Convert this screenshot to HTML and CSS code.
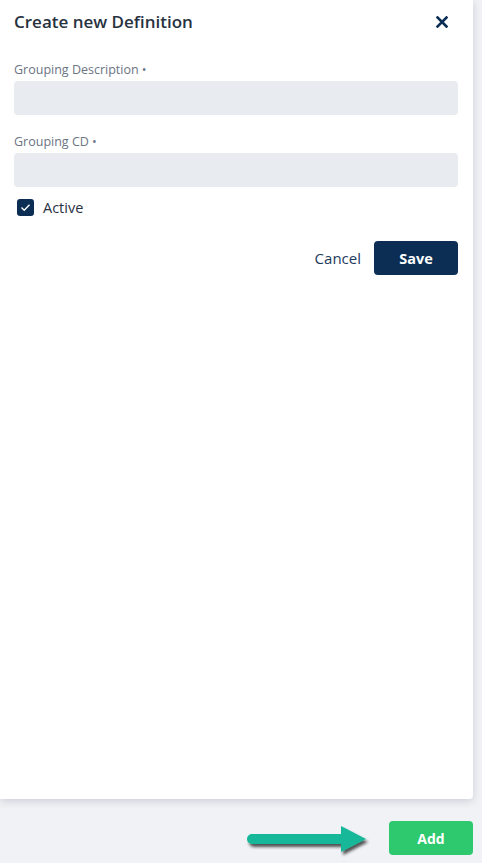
FILE: index.html
```html
<!DOCTYPE html>
<html lang="en">
<head>
    <meta charset="UTF-8">
    <meta name="viewport" content="width=device-width, initial-scale=1.0">
    <title>Create new Definition</title>
    <link rel="stylesheet" href="styles.css">
</head>
<body>

    <div class="panel">
        <!-- Header -->
        <div class="panel-header">
            <h1>Create new Definition</h1>
            <button class="close-btn" aria-label="Close">
                <svg width="12" height="12" viewBox="0 0 12 12">
                    <path d="M1.5 1.5 L10.5 10.5 M10.5 1.5 L1.5 10.5" stroke="#0c2e55" stroke-width="2.6" stroke-linecap="square"/>
                </svg>
            </button>
        </div>

        <!-- Form fields -->
        <div class="field first">
            <label>Grouping Description •</label>
            <input type="text" class="text-input">
        </div>

        <div class="field">
            <label>Grouping CD •</label>
            <input type="text" class="text-input">
        </div>

        <div class="check-row">
            <span class="checkbox">
                <svg width="11" height="9" viewBox="0 0 11 9">
                    <path d="M1.5 4.6 L4.2 7.2 L9.5 1.8" fill="none" stroke="#fff" stroke-width="1.4"/>
                </svg>
            </span>
            <span class="check-label">Active</span>
        </div>

        <div class="actions">
            <button class="cancel-btn">Cancel</button>
            <button class="save-btn">Save</button>
        </div>
    </div>

    <div class="bottom-bar">
        <svg class="arrow" width="130" height="36" viewBox="0 0 130 36">
            <defs>
                <filter id="shadow" x="-10%" y="-30%" width="130%" height="180%">
                    <feDropShadow dx="2" dy="3" stdDeviation="1.6" flood-color="#1a1a1a" flood-opacity="0.75"/>
                </filter>
            </defs>
            <g filter="url(#shadow)">
                <rect x="2" y="11" width="98" height="10" rx="5" fill="#13b899"/>
                <polygon points="96,3 121,16 96,29" fill="#13b899"/>
            </g>
        </svg>
        <button class="add-btn">Add</button>
    </div>

</body>
</html>
```

FILE: styles.css
```css
body {
    font-family: "Open Sans", Arial, sans-serif;
    background-color: #f0f2f5;
    margin: 0;
    padding: 0;
}

.panel {
    width: 473px;
    height: 799px;
    box-sizing: border-box;
    padding: 10px 15px 0 14px;
    background-color: #ffffff;
    border-radius: 0 0 4px 0;
    box-shadow: 0 2px 8px rgba(30, 45, 70, 0.18);
}

.panel-header {
    display: flex;
    justify-content: space-between;
    align-items: center;
    height: 24px;
}

h1 {
    margin: 0;
    font-size: 17px;
    line-height: 24px;
    font-weight: 600;
    color: #27323f;
}

.close-btn {
    border: none;
    background: none;
    padding: 0;
    margin-right: 10px;
    display: flex;
    cursor: pointer;
}

.field {
    margin-top: 19px;
}

.field.first {
    margin-top: 28px;
}

.field label {
    display: block;
    font-size: 12.5px;
    line-height: 16px;
    color: #6b7483;
    margin-bottom: 3px;
}

.text-input {
    display: block;
    width: 100%;
    height: 34px;
    box-sizing: border-box;
    border: none;
    border-radius: 4px;
    background-color: #e8ebef;
}

.check-row {
    display: flex;
    align-items: center;
    height: 20px;
    margin-top: 10px;
    padding-left: 3px;
}

.checkbox {
    width: 17px;
    height: 17px;
    border-radius: 3px;
    background-color: #0c2e55;
    display: flex;
    align-items: center;
    justify-content: center;
}

.check-label {
    margin-left: 9px;
    font-size: 14.5px;
    color: #27323f;
}

.actions {
    display: flex;
    justify-content: flex-end;
    align-items: center;
    gap: 13px;
    margin-top: 24px;
}

.cancel-btn {
    border: none;
    background: none;
    padding: 0;
    font-family: inherit;
    font-size: 15px;
    color: #1d3a5c;
    cursor: pointer;
}

.save-btn {
    width: 84px;
    height: 34px;
    border: none;
    border-radius: 4px;
    background-color: #0c2e55;
    color: #ffffff;
    font-family: inherit;
    font-size: 14.5px;
    font-weight: 700;
    cursor: pointer;
}

.bottom-bar {
    width: 473px;
    display: flex;
    justify-content: flex-end;
    align-items: center;
    margin-top: 18px;
}

.arrow {
    margin-right: 14px;
    margin-top: 6px;
}

.add-btn {
    width: 84px;
    height: 34px;
    border: none;
    border-radius: 4px;
    background-color: #2ec86e;
    color: #ffffff;
    font-family: inherit;
    font-size: 14px;
    font-weight: 700;
    cursor: pointer;
}
```
